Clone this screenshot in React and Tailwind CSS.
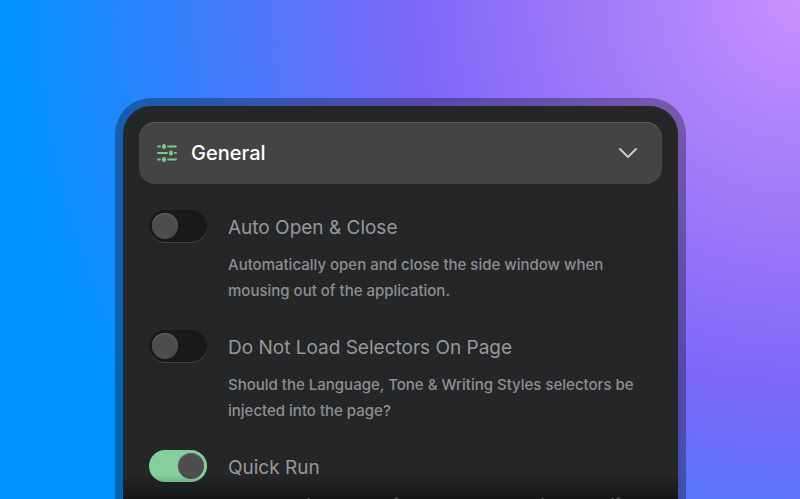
import { useState } from "react";

const SETTINGS = [
  {
    id: "auto-open",
    title: "Auto Open & Close",
    text: "Automatically open and close the side window when mousing out of the application.",
    on: false,
  },
  {
    id: "no-selectors",
    title: "Do Not Load Selectors On Page",
    text: "Should the Language, Tone & Writing Styles selectors be injected into the page?",
    on: false,
  },
  {
    id: "quick-run",
    title: "Quick Run",
    text: "Enables quick launch of any prompt by holding the shift key.",
    on: true,
  },
];

function IconSliders() {
  return (
    <svg className="w-[22px] h-[20px] shrink-0" viewBox="0 0 22 20" fill="none" stroke="#7cc797"
      strokeWidth="1.8" strokeLinecap="round" aria-hidden="true">
      <path d="M1 3.500h2M11 3.500h8M1 10h9M18 10h1M1 16.500h2M11 16.500h8" />
      <path d="M7 3v1M14 9.500v1M7 16v1" strokeWidth="4" />
    </svg>
  );
}

function IconChevron() {
  return (
    <svg className="w-5 h-3 shrink-0" viewBox="0 0 20 12" fill="none" stroke="#c9c9c9"
      strokeWidth="2" strokeLinecap="round" strokeLinejoin="round" aria-hidden="true">
      <path d="M2 2l8 8 8-8" />
    </svg>
  );
}

function Toggle({ id, checked, onChange }) {
  return (
    <input id={id} type="checkbox" role="switch" checked={checked} onChange={onChange}
      className="appearance-none shrink-0 w-[58px] h-8 p-[3px] rounded-full flex cursor-pointer
        bg-[#19191a] border-0 shadow-[0_1px_0_#434344]
        checked:bg-[#85cf9b] checked:justify-end checked:shadow-none
        before:content-[''] before:w-[26px] before:h-[26px] before:rounded-full before:bg-[#4d4d4d]
        before:shadow-[inset_0_1px_1px_#666666]" />
  );
}

function SettingRow({ id, title, text, on }) {
  const [checked, setChecked] = useState(on);

  return (
    <div className="flex items-start gap-[21px]">
      <Toggle id={id} checked={checked} onChange={(e) => setChecked(e.target.checked)} />
      <div className="flex-1">
        <label htmlFor={id} className="block text-[19px] leading-9 cursor-pointer">{title}</label>
        <p className="mt-1.5 text-[15px] leading-[26px] font-medium text-[#8e8e90]">{text}</p>
      </div>
    </div>
  );
}

export default function App() {
  return (
    <div className="h-screen overflow-hidden pl-[115px] pr-[114px] pt-[98px] font-['Inter',sans-serif]
      bg-[radial-gradient(circle_at_top_right,#c890fc_0%,#7e67f8_41%,#0092ff_84%)]">
      <main className="rounded-t-[36px] bg-black/30 px-2 pt-2">
        <div className="rounded-t-[28px] bg-[#252628] px-4 pt-4 pb-6 min-h-screen">
          <button type="button" className="w-full flex items-center gap-3 rounded-2xl bg-[#444444] pl-[18px] pr-6 py-4
            shadow-[inset_0_1px_0_#5c5c5c] text-white">
            <IconSliders />
            <span className="flex-1 text-left text-xl leading-[30px] font-medium">General</span>
            <IconChevron />
          </button>
          <div className="flex flex-col gap-[26px] pl-[10px] pt-[26px] text-[#98989a]">
            {SETTINGS.map((item) => <SettingRow key={item.id} {...item} />)}
          </div>
        </div>
      </main>
      <div className="fixed bottom-0 left-[123px] right-[122px] h-6 bg-linear-to-t from-black/40 to-transparent pointer-events-none" />
    </div>
  );
}
